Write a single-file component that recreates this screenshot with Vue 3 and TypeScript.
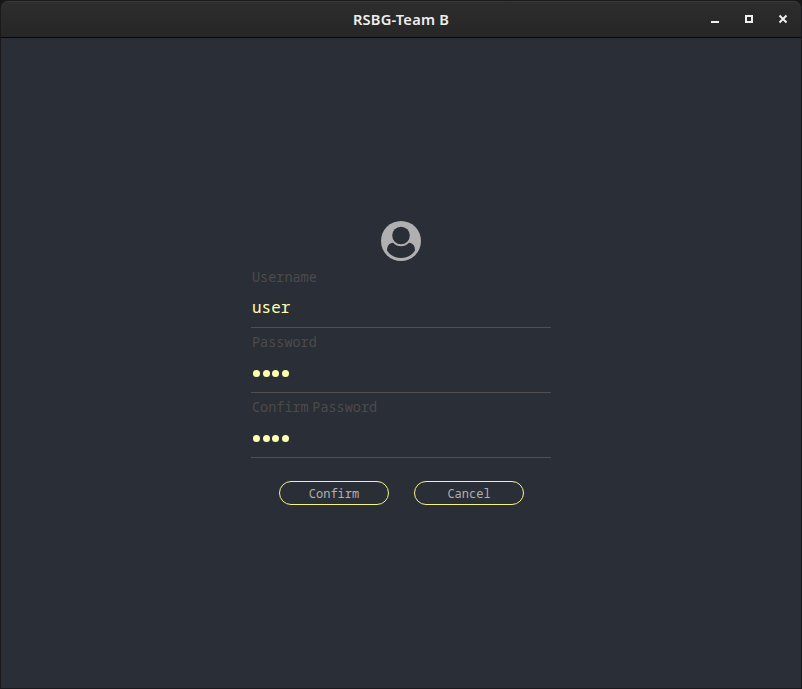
<script setup lang="ts">
import { reactive } from 'vue'

interface Field {
  label: string
  value: string
  secret: boolean
}

const fields = reactive<Field[]>([
  { label: 'Username', value: 'user', secret: false },
  { label: 'Password', value: 'user', secret: true },
  { label: 'Confirm Password', value: 'user', secret: true },
])
const actions: string[] = ['Confirm', 'Cancel']
</script>

<template>
  <div class="window">
    <header class="titlebar">
      <h1 class="title">RSBG-Team B</h1>
      <div class="controls">
        <svg width="10" height="10" viewBox="0 0 10 10"><path d="M1 7h8v2H1z" /></svg>
        <svg width="10" height="10" viewBox="0 0 10 10"><path fill-rule="evenodd" d="M1 1h8v8H1zM3 3v4h4V3z" /></svg>
        <svg width="10" height="10" viewBox="0 0 10 10"><path class="cross" d="M1.500 1.500l7 7M8.500 1.500l-7 7" /></svg>
      </div>
    </header>
    <main class="content">
      <svg class="avatar" width="40" height="40" viewBox="0 0 40 40">
        <circle class="disc" cx="20" cy="20" r="20" />
        <path class="cut" d="M6 29.5C6 25.2 8 22 12 21.800C16.500 26.500 23.500 26.500 28 21.800C32 22 34 25.200 34 29.500C30.500 34.700 25.800 37 20 37S9.500 34.700 6 29.500Z" />
        <circle class="cut" cx="20" cy="14.500" r="8.800" />
      </svg>
      <form class="form" @submit.prevent>
        <label v-for="field in fields" :key="field.label" class="field">
          <span class="label">{{ field.label }}</span>
          <span v-if="field.secret" class="dots">
            <i v-for="n in field.value.length" :key="n" class="dot"></i>
          </span>
          <span v-else class="value">{{ field.value }}</span>
        </label>
        <div class="actions">
          <button v-for="action in actions" :key="action" type="button" class="button">{{ action }}</button>
        </div>
      </form>
    </main>
  </div>
</template>

<style>
body {
  background: #171717;
}
</style>

<style scoped>
.window {
  box-sizing: border-box;
  height: 689px;
  display: flex;
  flex-direction: column;
  border: 1px solid #1a1a1c;
  border-radius: 8px 8px 0 0;
  background: #2a2e37;
  overflow: hidden;
}
.titlebar {
  box-sizing: border-box;
  height: 37px;
  flex: none;
  display: grid;
  grid-template-columns: 1fr auto 1fr;
  align-items: center;
  border-top: 1px solid #393939;
  border-bottom: 1px solid #070707;
  border-radius: 7px 7px 0 0;
  background: linear-gradient(#2d2d2d, #262626);
}
.title {
  grid-column: 2;
  margin: 0;
  padding-bottom: 2px;
  font: 600 14.670px/20px "Noto Sans", sans-serif;
  letter-spacing: 0.2px;
  color: #eeeeec;
}
.controls {
  display: flex;
  justify-content: flex-end;
  gap: 24px;
  padding: 0 13px 2px 0;
  fill: #eeeeec;
}
.cross {
  stroke: #eeeeec;
  stroke-width: 2;
}
.content {
  flex: 1;
  display: flex;
  flex-direction: column;
  align-items: center;
  padding-top: 183px;
  font-family: "Noto Sans Mono", "DejaVu Sans Mono", monospace;
}
.avatar {
  flex: none;
}
.disc {
  fill: #b0b0b0;
}
.cut {
  fill: #2a2e37;
}
.form {
  width: 300px;
  padding-top: 2px;
}
.field {
  box-sizing: border-box;
  height: 65px;
  display: flex;
  flex-direction: column;
  padding-left: 1px;
  border-bottom: 1px solid #505050;
}
.label {
  height: 29px;
  font-size: 13.500px;
  line-height: 28px;
  word-spacing: -4.500px;
  color: #4b4b4b;
}
.value {
  font-size: 16px;
  line-height: 30px;
  color: #ffffb0;
}
.dots {
  display: flex;
  gap: 2.400px;
  padding: 13px 0 0 1px;
}
.dot {
  width: 7.200px;
  height: 7.200px;
  border-radius: 50%;
  background: #ffffb0;
}
.actions {
  display: flex;
  justify-content: center;
  gap: 25px;
  padding-top: 23px;
}
.button {
  box-sizing: border-box;
  width: 110px;
  height: 24px;
  padding: 1px 0 0 1px;
  border: 1px solid #f5f583;
  border-radius: 12px;
  background: transparent;
  font-family: inherit;
  font-size: 12px;
  line-height: 20px;
  color: #b0b0b0;
}
</style>
